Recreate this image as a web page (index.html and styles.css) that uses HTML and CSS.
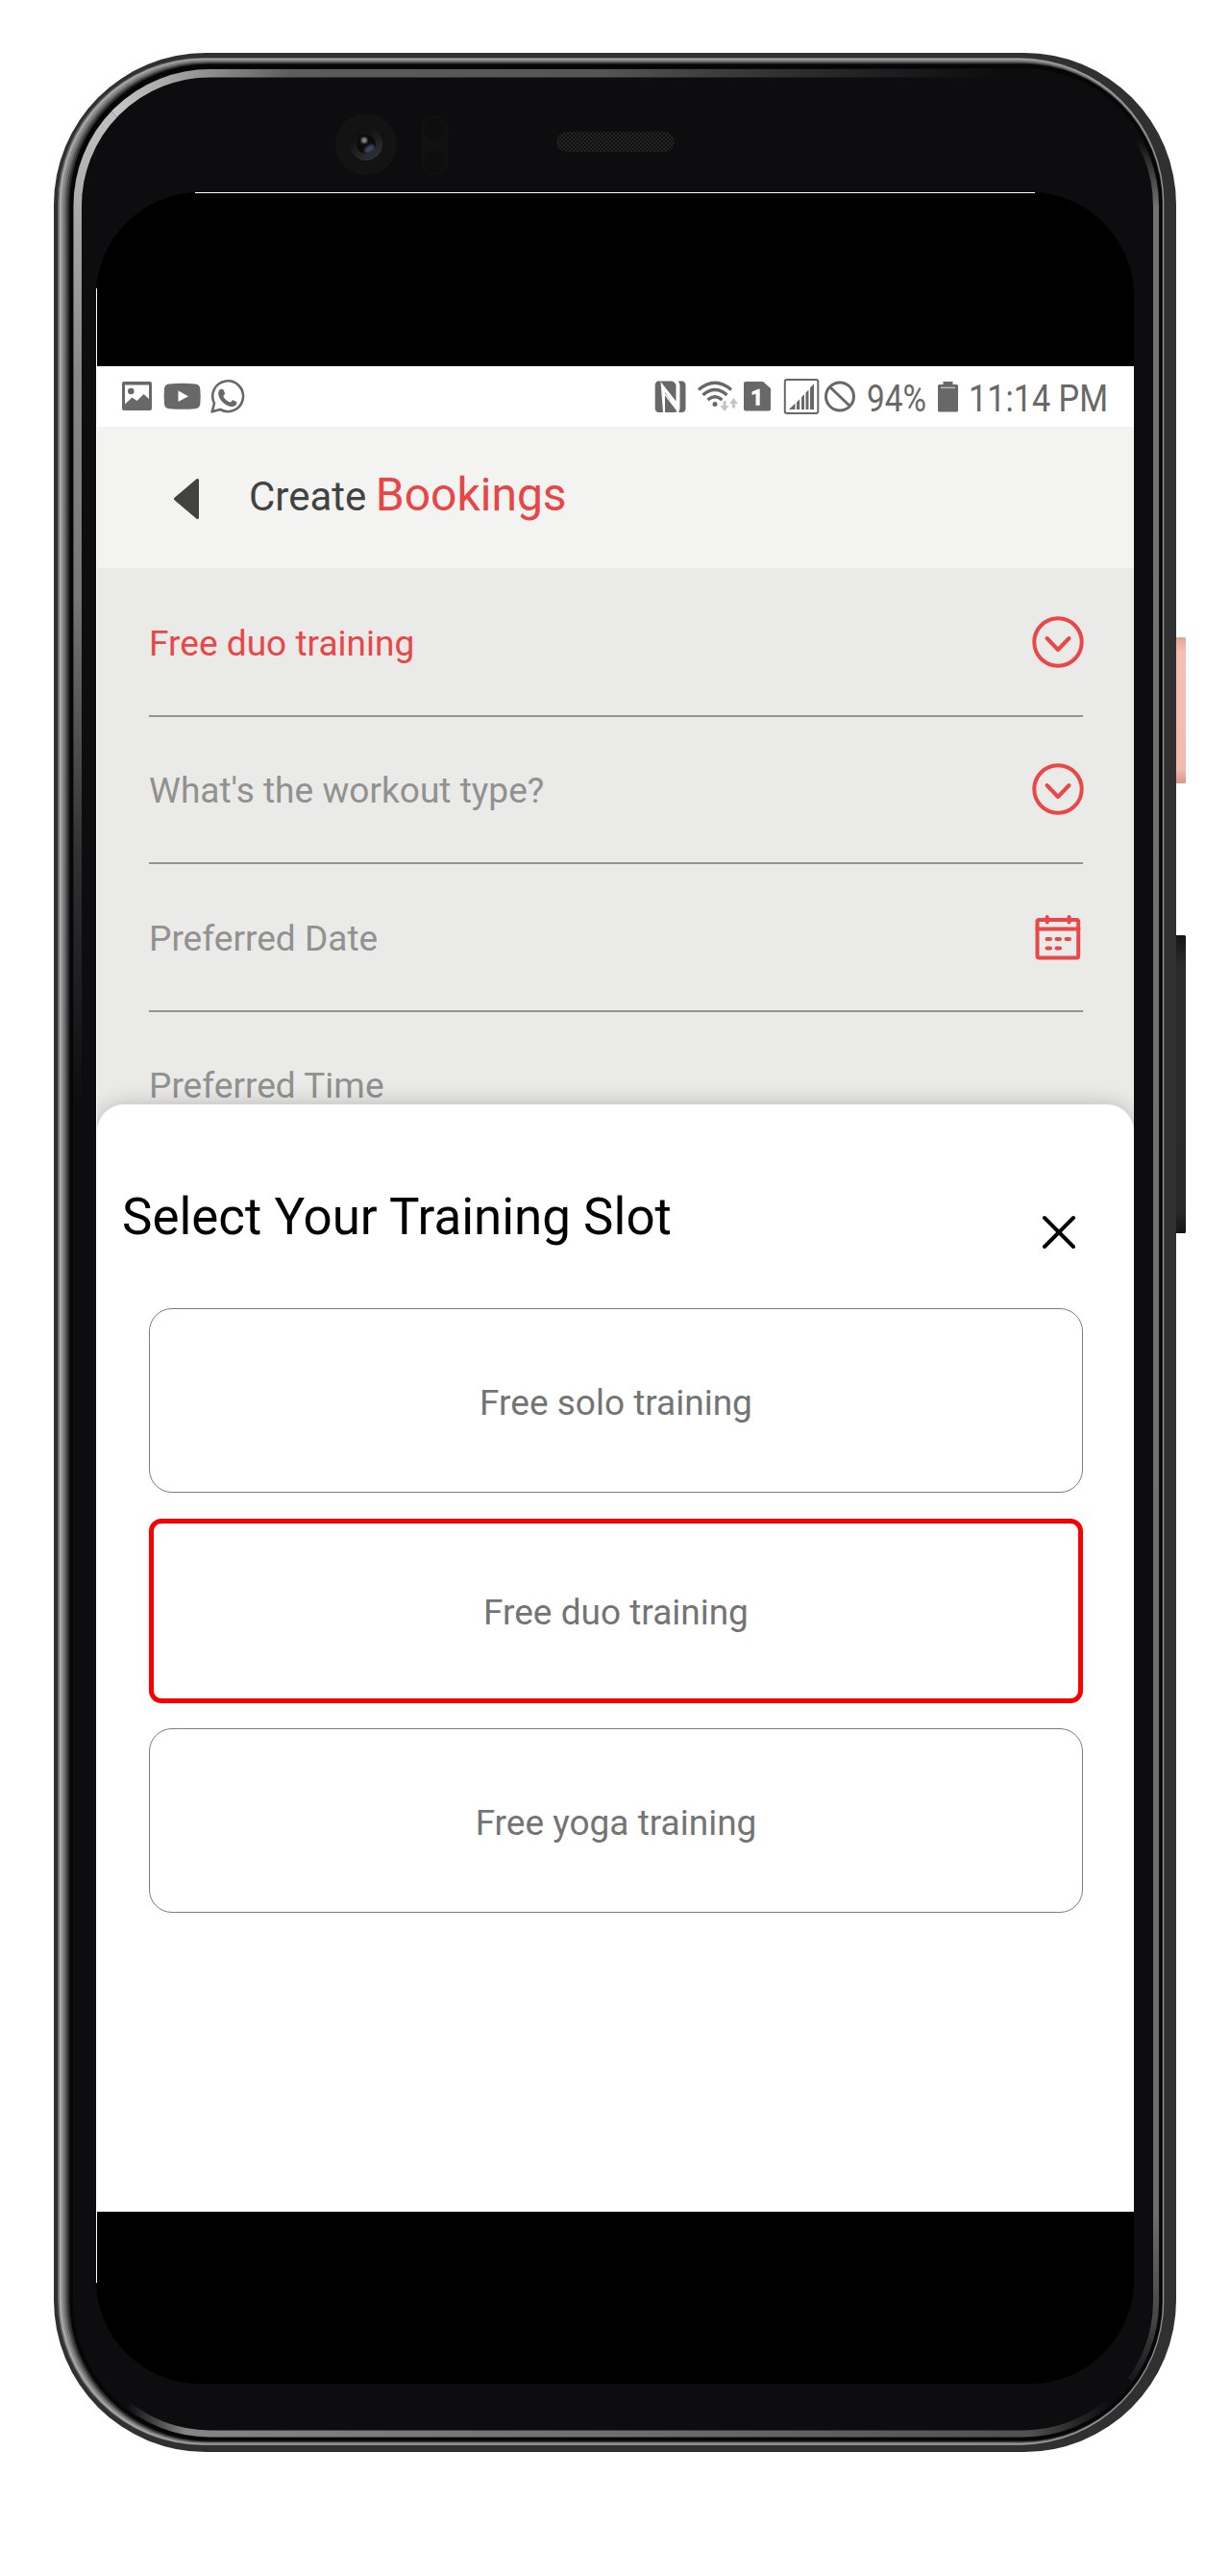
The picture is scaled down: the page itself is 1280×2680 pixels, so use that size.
FILE: index.html
```html
<!DOCTYPE html>
<html lang="en">
<head>
<meta charset="utf-8">
<title>Create Bookings</title>
<link rel="stylesheet" href="styles.css">
</head>
<body>
<main class="stage">
  <svg class="device" viewBox="0 0 1280 2680" aria-hidden="true">
    <defs>
      <linearGradient id="pink" x1="0" y1="0" x2="0" y2="1"><stop offset="0" stop-color="#e6a397"/><stop offset=".1" stop-color="#f5beb2"/><stop offset=".9" stop-color="#f3bbb0"/><stop offset="1" stop-color="#d9978b"/></linearGradient>
      <linearGradient id="dark" x1="0" y1="0" x2="0" y2="1"><stop offset="0" stop-color="#151515"/><stop offset=".1" stop-color="#2a2a2a"/><stop offset=".92" stop-color="#292929"/><stop offset="1" stop-color="#151515"/></linearGradient>
      <linearGradient id="sideL" gradientUnits="userSpaceOnUse" x1="0" y1="90" x2="0" y2="1150"><stop offset="0" stop-color="#c6c6c6"/><stop offset=".13" stop-color="#a8a8a8"/><stop offset=".28" stop-color="#888"/><stop offset=".5" stop-color="#777"/><stop offset=".75" stop-color="#777" stop-opacity=".35"/><stop offset="1" stop-color="#777" stop-opacity="0"/></linearGradient>
      <linearGradient id="sideT" gradientUnits="userSpaceOnUse" x1="120" y1="0" x2="1040" y2="0"><stop offset="0" stop-color="#c6c6c6"/><stop offset=".1" stop-color="#929292"/><stop offset=".2" stop-color="#5c5c5c"/><stop offset=".55" stop-color="#555"/><stop offset="1" stop-color="#444" stop-opacity="0"/></linearGradient>
      <linearGradient id="sideR" gradientUnits="userSpaceOnUse" x1="0" y1="145" x2="0" y2="2495"><stop offset="0" stop-color="#737373" stop-opacity="0"/><stop offset=".03" stop-color="#737373"/><stop offset=".92" stop-color="#6c6c6d"/><stop offset=".965" stop-color="#555" stop-opacity=".8"/><stop offset="1" stop-color="#444" stop-opacity="0"/></linearGradient>
      <linearGradient id="sideB" gradientUnits="userSpaceOnUse" x1="132" y1="0" x2="1155" y2="0"><stop offset="0" stop-color="#808080" stop-opacity="0"/><stop offset=".06" stop-color="#858585"/><stop offset=".5" stop-color="#6e6e6e"/><stop offset=".92" stop-color="#505050"/><stop offset="1" stop-color="#444" stop-opacity="0"/></linearGradient>
      <clipPath id="cL"><path d="M50 50 240 240V1150H50Z"/></clipPath>
      <clipPath id="cT"><path d="M50 50H1100V240H240Z"/></clipPath>
      <clipPath id="cR"><path d="M1230 80 1100 210V2400L1230 2530Z"/></clipPath>
      <clipPath id="cB"><path d="M60 2560 220 2400H1060L1230 2570Z"/></clipPath>
      <pattern id="mesh" width="4" height="4" patternUnits="userSpaceOnUse"><path d="M0 0h2v2h2v2H2V2H0Z" fill="#242424"/></pattern>
      <linearGradient id="lens" x1=".2" y1="0" x2=".8" y2="1"><stop offset=".2" stop-color="#111112"/><stop offset="1" stop-color="#333337"/></linearGradient>
      <filter id="soft"><feGaussianBlur stdDeviation="1.3"/></filter>
    </defs>
    <rect x="1218" y="663" width="16" height="152" rx="1.5" fill="url(#pink)"/>
    <rect x="1218" y="973" width="16" height="310" rx="1.5" fill="url(#dark)"/>
    <rect x="56" y="55" width="1168" height="2496" rx="158" fill="#303030"/>
    <rect x="60" y="60" width="1151.5" height="2484" rx="151" fill="#666"/>
    <rect x="61.7" y="60.8" width="1149.3" height="2482.7" rx="150" fill="#a9a9a9"/>
    <rect x="64" y="61.8" width="1146.5" height="2480.9" rx="149" fill="#8b8b8c"/>
    <rect x="66.2" y="63.2" width="1144" height="2478.6" rx="148" fill="#707071"/>
    <rect x="68.3" y="64.5" width="1141.6" height="2476.6" rx="147" fill="#4c4c4d"/>
    <rect x="70.3" y="65.5" width="1139.4" height="2475" rx="146" fill="#2c2c2d"/>
    <rect x="72.3" y="66.5" width="1137.2" height="2473" rx="145" fill="#060607"/>
    <rect x="76" y="71" width="1131" height="2465" rx="142" fill="#0d0d0f"/>
    <g fill="none" stroke-width="8.5">
      <rect x="80.7" y="76.2" width="1122" height="2456" rx="138" stroke="url(#sideL)" clip-path="url(#cL)"/>
      <rect x="80.7" y="76.2" width="1122" height="2456" rx="138" stroke="url(#sideT)" clip-path="url(#cT)"/>
      <rect x="80.7" y="76.2" width="1122.3" height="2456" rx="138" stroke-width="6" stroke="url(#sideR)" clip-path="url(#cR)"/>
      <rect x="80.7" y="76.2" width="1122" height="2455.8" rx="138" stroke-width="7" stroke="url(#sideB)" clip-path="url(#cB)"/>
    </g>
    <circle cx="381" cy="150" r="32" fill="#131313"/>
    <circle cx="381" cy="150" r="17" fill="url(#lens)"/>
    <circle cx="381" cy="150" r="10" fill="#0c0c0e"/>
    <ellipse cx="384.500" cy="155" rx="6" ry="3.500" transform="rotate(-35 384.500 155)" fill="#3c4564" filter="url(#soft)"/>
    <circle cx="379" cy="146" r="3" fill="#8a8a8a" filter="url(#soft)"/>
    <rect x="438" y="120" width="28" height="62" rx="14" fill="#111112"/>
    <circle cx="452" cy="134" r="11" fill="#0e0e0f"/><circle cx="452" cy="168" r="11" fill="#0e0e0f"/>
    <rect x="579" y="137" width="123" height="21" rx="10.500" fill="#101011"/>
    <rect x="579" y="137" width="123" height="21" rx="10.500" fill="url(#mesh)"/>
    <rect x="100" y="200" width="1080" height="2280" rx="108" fill="#000"/>
    <path d="M203 200.500H1077M100.500 300V2375" stroke="#fff" fill="none"/>
  </svg>

  <div class="screen">
    <div class="status">
      <svg width="200" height="63" viewBox="101 381 200 63" fill="#686868">
        <path fill-rule="evenodd" d="M129 397h27q2 0 2 2v26q0 2-2 2h-27q-2 0-2-2v-26q0-2 2-2Zm1 3.500v20l7.500-7 5 3.500 7-7 5.500 5v-14.500Z"/>
        <circle cx="136.300" cy="407" r="3.300"/>
        <path d="M176 399.500q13.500-1.400 27 0 5 .6 5.300 5 .8 8 0 16-.4 4-5.300 4.700-13.500 1.200-27 0-4.600-.7-5-5-.8-8 0-16 .4-4.200 5-4.700Z"/>
        <path d="m185.500 406.500 10.500 5.700-10.500 5.700Z" fill="#fff"/>
        <path d="M220.700 428.300 223 419.500A15.900 15.900 0 1 1 229.200 426Z" fill="none" stroke="#686868" stroke-width="2.600" stroke-linejoin="round"/>
        <path d="M229.500 405c2.200-.9 3 .1 3.500 1.600l1 2.700c.3 1.200-2 2.500-1.600 3.200 1.600 2.900 4 4.900 7 6 1 .3 2.200-2.600 3.200-2.200l3.400 1.800c1 .7.200 3-1 3.900-2.600 1.900-6.300 1-9.600-.8-3.500-2-6.200-5-7.500-8.500-1.200-3-.8-6.500 1.600-7.700Z"/>
      </svg>
      <svg width="520" height="63" viewBox="660 381 520 63" fill="#686868">
        <path d="M685 396.500h13q4 0 5.500 4v17l-16-20.500 2.500 32h-5q-3.300-1-3.300-4v-24q0-4 3.300-4.500Z"/>
        <path d="M705.500 396.500h4.500q3.500.6 3.500 4.500v23.500q0 4-3.500 4.500h-4q1.500-2 1.500-5v-23q0-3-2-4.500ZM692 408l13 20q-1.500 1-4 1h-9Z"/>
        <path d="m692 405 12 15.500M691 428V409l14.500 19" stroke="#fff" stroke-width="1.300" fill="none"/>
        <g fill="none" stroke="#686868" stroke-width="3.300"><path d="M727 405.500q17-14.500 34 0M731.500 411q12.500-11 25 0M736.500 416q7.500-6.500 15 0"/></g>
        <circle cx="744" cy="420.500" r="2.500"/>
        <path d="M754 417v7M763.500 424.500v-7" stroke="#c5c5c5" stroke-width="3"/>
        <path d="M749.500 422h9l-4.500 6ZM759 420h9l-4.500-6Z" fill="#c5c5c5"/>
        <path d="M776 397h18l8 7v21.500q0 2-2 2h-24q-2 0-2-2V399q0-2 2-2Z"/>
        <path d="M790.700 404.700v17h-4.200v-12l-4 1.200v-3.300l6.500-2.900Z" fill="#fff"/>
        <rect x="816.800" y="395" width="34.500" height="35" rx="2" fill="none" stroke="#686868" stroke-width="2"/>
        <path d="M821 426 827.500 419.500V426ZM829 426v-7.500l3.200-3.200V426ZM834 426v-12.800l3-3V426ZM838.500 426v-17.500l3-3V426ZM843 426v-22.500l1.500-1.800 2.500-2.500V426Z"/>
        <g fill="none" stroke="#686868" stroke-width="3"><circle cx="874" cy="412.500" r="14.500"/><path d="m863.500 402.500 21 20"/></g>
        <path d="M981.500 397h10v3h4q1.500 0 1.500 1.500V427q0 1.500-1.500 1.500h-18q-1.500 0-1.500-1.500v-25.500q0-1.500 1.500-1.500h4Z"/>
        <path d="M979 403.300h15" stroke="#ddd" stroke-width="1"/>
        <text class="status-text" x="902" y="428" textLength="62" lengthAdjust="spacingAndGlyphs">94%</text>
        <text class="status-text" x="1008" y="428" textLength="145" lengthAdjust="spacingAndGlyphs">11:14 PM</text>
      </svg>
    </div>

    <header class="header">
      <svg class="back" width="28" height="44" viewBox="0 0 28 44"><path d="M25.500 2.500V41.500L2.500 22Z" fill="#42423f" stroke="#42423f" stroke-width="3" stroke-linejoin="round"/></svg>
      <h1 class="title">Create <span class="accent">Bookings</span></h1>
    </header>

    <section class="form">
      <div class="field selected"><span>Free duo training</span>
        <svg width="54" height="54" viewBox="0 0 54 54" class="icon"><circle cx="27" cy="27" r="24.700"/><path d="m15.500 23 11.500 12 11.500-12"/></svg></div>
      <div class="field"><span>What's the workout type?</span>
        <svg width="54" height="54" viewBox="0 0 54 54" class="icon"><circle cx="27" cy="27" r="24.700"/><path d="m15.500 23 11.500 12 11.500-12"/></svg></div>
      <div class="field"><span>Preferred Date</span>
        <svg width="54" height="54" viewBox="0 0 54 54" class="icon"><rect x="5.500" y="9" width="42.700" height="39.500" rx="2"/><path d="M5.500 18.500h43M15.700 6v5.500M38.600 6v5.500M15.500 29h3.500M25.500 29h3.500M35.500 29h3.500M15.500 38.500h3.500M25.500 38.500h3.500"/></svg></div>
      <div class="field"><span>Preferred Time</span></div>
    </section>

    <section class="sheet">
      <div class="sheet-head">
        <h2 class="sheet-title">Select Your Training Slot</h2>
        <svg class="close" width="36" height="36" viewBox="0 0 36 36"><path d="m3 3 30 30M33 3 3 33" stroke="#000" stroke-width="4" stroke-linecap="round"/></svg>
      </div>
      <div class="options">
        <div class="option">Free solo training</div>
        <div class="option chosen">Free duo training</div>
        <div class="option">Free yoga training</div>
      </div>
    </section>
  </div>
</main>
</body>
</html>
```
FILE: styles.css
```css
* { box-sizing: border-box; }
body { margin: 0; background: #fff; font-family: Roboto, "Liberation Sans", sans-serif; }
.stage { position: relative; width: 1280px; height: 2680px; padding: 381px 100px 0 101px; }
.device { position: absolute; inset: 0; width: 1280px; height: 2680px; }
.screen { position: relative; height: 1920px; overflow: hidden; background: #fff; }
.status { display: flex; justify-content: space-between; height: 63px; }
.status-text { font-family: Roboto, sans-serif; font-size: 38.5px; }
.header { display: flex; align-items: flex-start; height: 147px; padding: 53px 0 0 79px; background: #f3f3f1; }
.back { flex: none; }
.title { margin: -17px 0 0 51px; font-size: 42px; line-height: 70px; font-weight: 400; color: #42423f; white-space: nowrap; }
.accent { margin-left: -1px; font-size: 48px; color: #ea4545; }
.form { height: 588px; padding: 1px 52px 0 54px; overflow: hidden; background: #eaeae8; }
.field { display: flex; align-items: center; justify-content: space-between; height: 153.500px; margin-right: 1px; border-bottom: 2px solid #949492; font-size: 37.100px; color: #91918f; }
.field span { padding-top: 3px; }
.field .icon { margin-right: -0.500px; }
.selected { color: #e84747; }
.icon { fill: none; stroke: #ea4747; stroke-width: 4; stroke-linecap: round; stroke-linejoin: round; }
.sheet { position: relative; height: 1182px; margin-top: -30px; background: #fff; border-radius: 28px 28px 0 0; box-shadow: 0 0 22px rgba(0, 0, 0, .22); }
.sheet-head { display: flex; justify-content: space-between; height: 212px; padding: 85px 60px 0 26px; }
.sheet-title { margin: 0; font-size: 52.900px; line-height: 64px; font-weight: 400; color: #000; }
.close { margin-top: 30px; }
.options { display: flex; flex-direction: column; gap: 26.500px; padding: 0 53px 0 54px; }
.option { display: flex; align-items: center; justify-content: center; height: 192px; padding-top: 4px; border: 1px solid #7c7c7c; border-radius: 24px; font-size: 37px; color: #747474; }
.chosen { padding-top: 3px; border: 5px solid #fb0000; border-radius: 13px; }
```
